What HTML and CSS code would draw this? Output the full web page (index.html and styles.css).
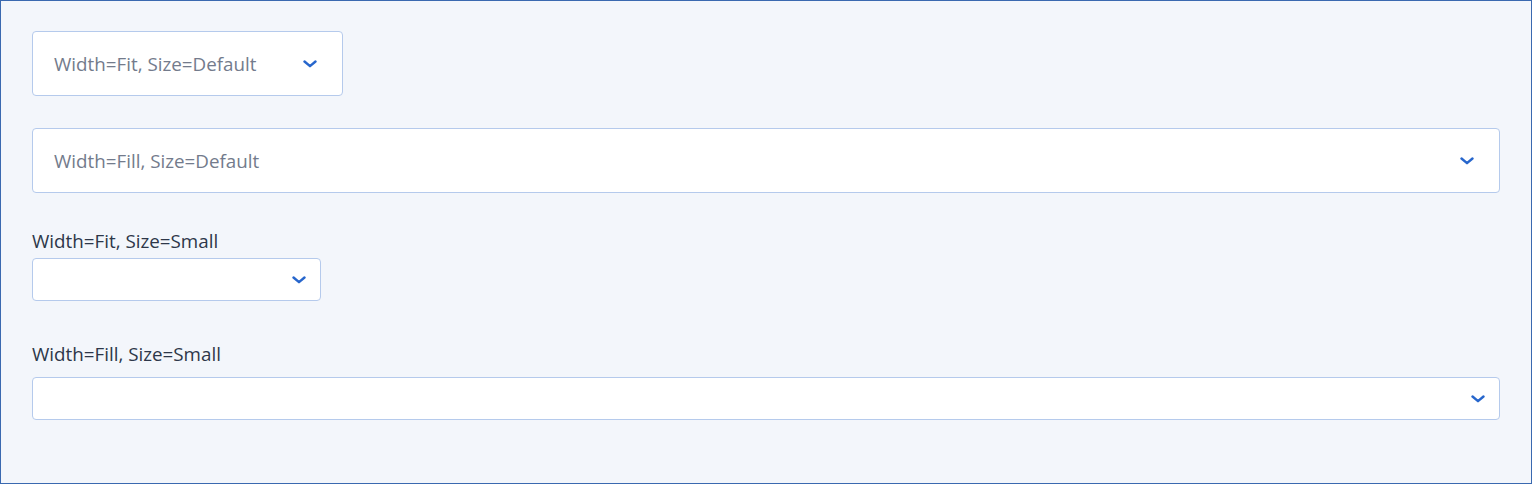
FILE: index.html
```html
<!DOCTYPE html>
<html lang="en">
<head>
    <meta charset="UTF-8">
    <title>Select</title>
    <link rel="stylesheet" href="styles.css">
</head>
<body>
<div class="frame">
    <div class="select select-fit">
        <span class="select-value">Width=Fit, Size=Default</span>
        <svg class="chevron" width="14" height="8" viewBox="0 0 14 8"><path d="M1.5 1.5 L7 6.2 L12.5 1.5" /></svg>
    </div>

    <div class="select select-fill">
        <span class="select-value">Width=Fill, Size=Default</span>
        <svg class="chevron" width="14" height="8" viewBox="0 0 14 8"><path d="M1.5 1.5 L7 6.2 L12.5 1.5" /></svg>
    </div>

    <div class="field field-fit">
        <label class="field-label">Width=Fit, Size=Small</label>
        <div class="select select-small select-small-fit">
            <svg class="chevron" width="14" height="8" viewBox="0 0 14 8"><path d="M1.5 1.5 L7 6.2 L12.5 1.5" /></svg>
        </div>
    </div>

    <div class="field field-fill">
        <label class="field-label">Width=Fill, Size=Small</label>
        <div class="select select-small">
            <svg class="chevron" width="14" height="8" viewBox="0 0 14 8"><path d="M1.5 1.5 L7 6.2 L12.5 1.5" /></svg>
        </div>
    </div>
</div>
</body>
</html>
```

FILE: styles.css
```css
html, body {
    margin: 0;
    height: 100%;
}

body {
    font-family: "Open Sans", "Noto Sans", sans-serif;
    background-color: #f3f6fb;
}

.frame {
    box-sizing: border-box;
    height: 484px;
    border: 1px solid #3a69b0;
    padding: 30px 31px;
    display: flex;
    flex-direction: column;
    align-items: flex-start;
}

.select {
    box-sizing: border-box;
    display: flex;
    align-items: center;
    justify-content: space-between;
    height: 65px;
    padding: 0 25px 0 21px;
    background-color: white;
    border: 1px solid #b5caec;
    border-radius: 4px;
}

.select-fit {
    width: 311px;
}

.select-fill {
    width: 100%;
    margin-top: 32px;
}

.select-value {
    font-size: 18.8px;
    color: #737b8c;
}

.chevron {
    fill: none;
    stroke: #2766cc;
    stroke-width: 2.4;
    stroke-linecap: round;
    stroke-linejoin: round;
}

.select-small {
    width: 100%;
    height: 43px;
    padding: 0 14px 0 12px;
    justify-content: flex-end;
}

.select-small-fit {
    width: 289px;
}

.field {
    display: flex;
    flex-direction: column;
    align-self: stretch;
    align-items: flex-start;
}

.field-label {
    font-size: 18.8px;
    line-height: 24px;
    color: #2d3749;
}

.field-fit {
    margin-top: 36px;
    gap: 5px;
}

.field-fill {
    margin-top: 41px;
    gap: 11px;
}
```
